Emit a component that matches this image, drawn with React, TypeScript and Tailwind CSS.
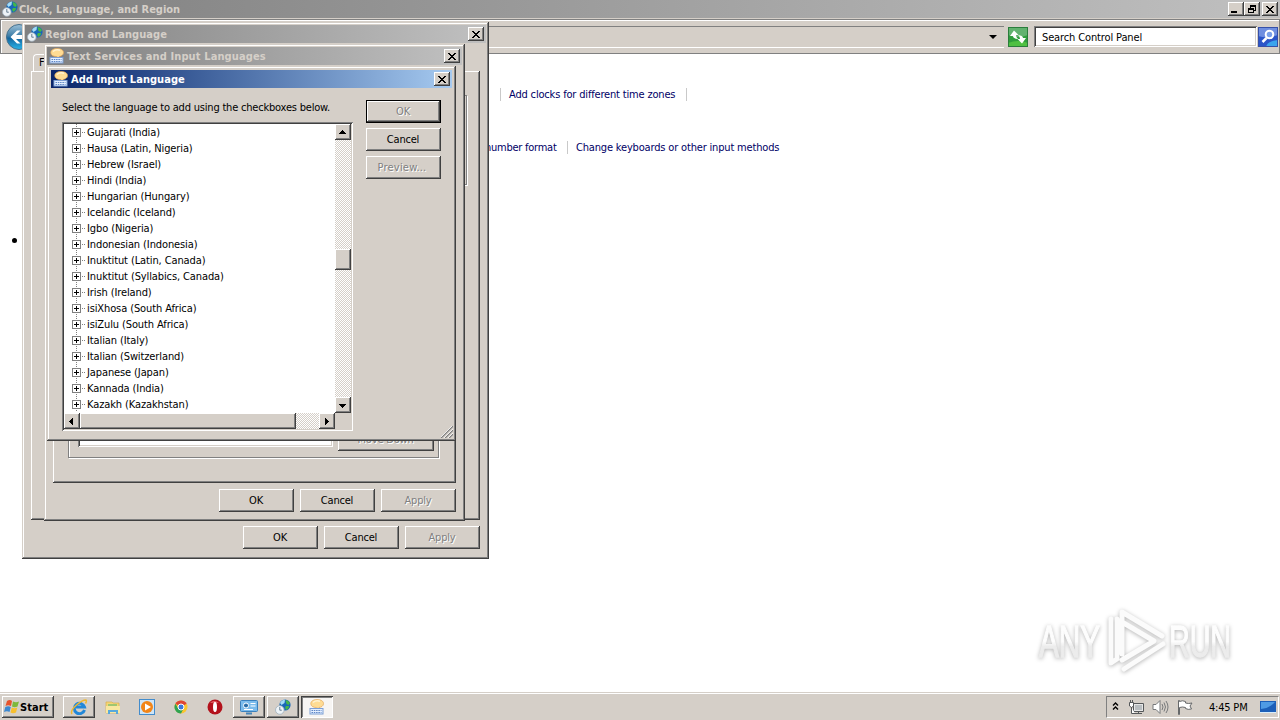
import type { ReactNode } from 'react'
import { clsx } from 'clsx'

const languages = [
    'Gujarati (India)',
    'Hausa (Latin, Nigeria)',
    'Hebrew (Israel)',
    'Hindi (India)',
    'Hungarian (Hungary)',
    'Icelandic (Iceland)',
    'Igbo (Nigeria)',
    'Indonesian (Indonesia)',
    'Inuktitut (Latin, Canada)',
    'Inuktitut (Syllabics, Canada)',
    'Irish (Ireland)',
    'isiXhosa (South Africa)',
    'isiZulu (South Africa)',
    'Italian (Italy)',
    'Italian (Switzerland)',
    'Japanese (Japan)',
    'Kannada (India)',
    'Kazakh (Kazakhstan)',
]

const raised = 'bg-[#d5cfc8] shadow-[inset_-1px_-1px_#404040,inset_1px_1px_#fff,inset_-2px_-2px_#808080]'
const frame = 'bg-[#d5cfc8] shadow-[inset_-1px_-1px_#404040,inset_1px_1px_#d5cfc8,inset_-2px_-2px_#808080,inset_2px_2px_#fff]'
const sunken = 'shadow-[inset_1px_1px_#808080,inset_-1px_-1px_#fff,inset_2px_2px_#404040,inset_-2px_-2px_#d5cfc8]'
const dither = 'bg-[repeating-conic-gradient(#fff_0_25%,#d5cfc8_0_50%)] bg-[length:2px_2px]'

function GlobeIcon() {
    return (
        <svg viewBox="0 0 16 16" className="size-4 shrink-0">
            <circle cx="10" cy="6" r="5.6" fill="#1768b8" />
            <path d="M5 4q1-3 5-3.500L9.500 4 6.500 6z" fill="#a5dcf5" />
            <path d="M10.500 1q3 .5 4.500 3l-1.500 2-2-1zM11 7l3 0q.5 2-2.500 4l-1.500-2z" fill="#43b649" />
            <circle cx="4.800" cy="11" r="4.300" fill="#edf3f7" stroke="#9fb0bc" strokeWidth=".8" />
            <path d="M4.800 8v3.200h2" fill="none" stroke="#5b7488" strokeWidth=".9" />
        </svg>
    )
}

function KeyboardIcon({ className = 'size-4' }: { className?: string }) {
    return (
        <svg viewBox="0 0 16 16" className={clsx('shrink-0', className)}>
            <path d="M8 .6c4 0 6.500 1.500 6.500 4S12 8.300 10 8.500l1 2.300L7.500 8.600C4 8.400 1.800 7 1.800 4.700S4 .6 8 .6z" fill="#ffdc94" stroke="#e2a659" strokeWidth=".7" />
            <path d="M4 3.500q3-2.500 7-1.200" stroke="#fff3d4" strokeWidth="1.500" fill="none" />
            <rect x="1" y="9.500" width="13" height="5.500" fill="#e4efff" stroke="#7d9fd4" />
            <path d="M2.500 11.500h10M2.500 13.500h10" stroke="#5d85c6" strokeDasharray="1.500 .8" />
        </svg>
    )
}

function CloseGlyph() {
    return (
        <svg viewBox="0 0 8 7" className="h-[7px] w-2" shapeRendering="crispEdges">
            <path d="M0 0h2v1h1v1h2V1h1V0h2v1H7v1H6v1H5v1h1v1h1v1h1v1H6V6H5V5H3v1H2v1H0V6h1V5h1V4h1V3H2V2H1V1H0z" fill="#000" />
        </svg>
    )
}

function CaptionButton({ children }: { children: ReactNode }) {
    return <button className={clsx('flex h-[14px] w-4 shrink-0 items-center justify-center', raised)}>{children}</button>
}

interface TitleBarProps {
    icon: ReactNode
    title: string
    active?: boolean
}

function TitleBar({ icon, title, active }: TitleBarProps) {
    return (
        <div
            className={clsx(
                'flex h-[18px] items-center bg-linear-to-r px-[2px] text-[11px] font-bold tracking-[0.05px]',
                active ? 'from-[#0a246a] to-[#a6caf0] text-white' : 'from-[#808080] to-[#c0c0c0] text-[#d5cfc8]'
            )}
        >
            {icon}
            <span className="ml-[2px] flex-1 whitespace-nowrap">{title}</span>
            <CaptionButton>
                <CloseGlyph />
            </CaptionButton>
        </div>
    )
}

interface ButtonProps {
    children: ReactNode
    disabled?: boolean
    isDefault?: boolean
    width?: string
}

function Button({ children, disabled, isDefault, width = 'w-[75px]' }: ButtonProps) {
    return (
        <button
            className={clsx(
                'flex h-[23px] shrink-0 items-center justify-center whitespace-nowrap pr-px',
                width,
                raised,
                isDefault && 'border border-black',
                disabled && 'text-[#808080] [text-shadow:1px_1px_#fff]'
            )}
        >
            {children}
        </button>
    )
}

function ScrollButton({ d }: { d: string }) {
    return (
        <div className={clsx('flex size-4 shrink-0 items-center justify-center pr-px', raised)}>
            <svg viewBox="0 0 8 8" className="mr-px size-2" shapeRendering="crispEdges">
                <path d={d} />
            </svg>
        </div>
    )
}

function LanguageTree() {
    return (
        <div className={clsx('h-[309px] w-[291px] bg-white p-[2px]', sunken)}>
            <div className="flex h-[289px]">
                <ul className="w-[271px] overflow-hidden tracking-[-0.11px]">
                    {languages.map((name) => (
                        <li key={name} className="flex h-4 items-center">
                            <span className="flex h-4 w-[25px] items-center bg-[repeating-linear-gradient(#808080_0_1px,transparent_1px_2px)] bg-[length:1px_16px] bg-[position:12px_0] bg-no-repeat pl-2">
                                <svg viewBox="0 0 14 9" className="h-[9px] w-[14px]" shapeRendering="crispEdges">
                                    <path d="M.5.5h8v8h-8z" fill="#fff" stroke="#808080" />
                                    <path d="M2 4h5v1H2zM4 2h1v5H4z" />
                                    <path d="M10 4h1v1h-1zM12 4h1v1h-1z" fill="#808080" />
                                </svg>
                            </span>
                            <span className="-ml-[2px] whitespace-nowrap">{name}</span>
                        </li>
                    ))}
                </ul>
                <div className={clsx('flex w-4 flex-col', dither)}>
                    <ScrollButton d="M4 2h1v1h1v1h1v1h1v1H1V5h1V4h1V3h1z" />
                    <div className={clsx('mt-[109px] h-[21px]', raised)} />
                    <div className="flex-1" />
                    <ScrollButton d="M1 3h7v1H7v1H6v1H5v1H4V6H3V5H2V4H1z" />
                </div>
            </div>
            <div className="flex h-4">
                <div className={clsx('flex w-[271px]', dither)}>
                    <ScrollButton d="M2 4h1V3h1V2h1V1h1v7H5V7H4V6H3V5H2z" />
                    <div className={clsx('w-[216px]', raised)} />
                    <div className="flex-1" />
                    <ScrollButton d="M3 1h1v1h1v1h1v1h1v1H6v1H5v1H4v1H3z" />
                </div>
                <div className="w-4 bg-[#d5cfc8]" />
            </div>
        </div>
    )
}

function RegionWindow() {
    return (
        <div className={clsx('absolute left-[22px] top-[22px] h-[537px] w-[467px] p-[3px]', frame)}>
            <TitleBar icon={<GlobeIcon />} title="Region and Language" />
            <div className="px-[6px] pt-[11px]">
                <div className="ml-[2px] h-[17px] w-3 rounded-tl-sm border-l border-t border-white pl-[5px] leading-[16px]">F</div>
                <div className={clsx('flex h-[449px] justify-end pr-[13px] pt-6', raised)}>
                    <div className="h-[90px] w-20 border border-[#808080] shadow-[1px_1px_#fff]" />
                </div>
                <div className="mt-[6px] flex justify-end gap-[6px]">
                    <Button>OK</Button>
                    <Button>Cancel</Button>
                    <Button disabled>Apply</Button>
                </div>
            </div>
        </div>
    )
}

function TextServicesWindow() {
    return (
        <div className={clsx('absolute left-[44px] top-[44px] h-[477px] w-[421px] p-[3px]', frame)}>
            <div className="h-[18px] [&>div]:tracking-[0.12px]">
                <TitleBar icon={<KeyboardIcon />} title="Text Services and Input Languages" />
            </div>
            <div className="px-[6px] pt-6">
                <div className={clsx('h-[394px] pl-[15px] pr-[17px] pt-5', raised)}>
                    <div className="flex h-[349px] items-end justify-between border border-[#808080] pb-[6px] pl-[9px] pr-1 shadow-[1px_1px_#fff,inset_1px_1px_#fff]">
                        <div className={clsx('mb-1 h-[120px] w-[255px] bg-white', sunken)} />
                        <Button disabled width="w-24">Move Down</Button>
                    </div>
                </div>
                <div className="mt-[6px] flex justify-end gap-[6px]">
                    <Button>OK</Button>
                    <Button>Cancel</Button>
                    <Button disabled>Apply</Button>
                </div>
            </div>
        </div>
    )
}

function AddLanguageWindow() {
    return (
        <div className={clsx('absolute left-[47px] top-[66px] h-[375px] w-[409px] p-1', frame)}>
            <TitleBar icon={<KeyboardIcon />} title="Add Input Language" active />
            <div className="flex justify-between px-[11px] pt-3">
                <div>
                    <p className="mb-2 h-[14px] whitespace-nowrap pt-px leading-[13px]">Select the language to add using the checkboxes below.</p>
                    <LanguageTree />
                </div>
                <div className="flex flex-col gap-[5px]">
                    <Button disabled isDefault>OK</Button>
                    <Button>Cancel</Button>
                    <Button disabled>
                        <span className="mr-[2px] tracking-[0.2px]">Preview...</span>
                    </Button>
                </div>
            </div>
            {/* Resize grip */}
            <svg viewBox="0 0 12 12" className="absolute bottom-[3px] right-[3px] size-3">
                <path d="M0 12 12 0M4 12l8-8M8 12l4-4" stroke="#808080" strokeWidth="1.400" />
                <path d="M-1 12 12-1M3 12l9-9M7 12l5-5" stroke="#fff" strokeWidth=".8" />
            </svg>
        </div>
    )
}

function ExplorerHeader() {
    return (
        <header className="h-[54px] bg-[#d5cfc8]">
            <div className="flex h-[18px] items-center bg-linear-to-r from-[#808080] to-[#c0c0c0] pl-[2px] pr-[2px] text-[11px] font-bold tracking-[-0.03px] text-[#d5cfc8]">
                <GlobeIcon />
                <span className="ml-px flex-1">Clock, Language, and Region</span>
                <CaptionButton>
                    <span className="mr-1 mt-[5px] h-[2px] w-[6px] bg-black" />
                </CaptionButton>
                <CaptionButton>
                    <svg viewBox="0 0 8 8" className="size-2" shapeRendering="crispEdges">
                        <path d="M2 0h6v6H6V5h1V2H3v1H2zM0 3h6v5H0zm1 2v2h4V5z" fillRule="evenodd" />
                    </svg>
                </CaptionButton>
                <span className="w-[2px]" />
                <CaptionButton>
                    <CloseGlyph />
                </CaptionButton>
            </div>
            <div className="mt-px flex h-[35px] items-center border border-[#808080] pl-1 pr-px shadow-[inset_1px_1px_#fff]">
                <svg viewBox="0 0 28 28" className="size-7">
                    <defs>
                        <linearGradient id="back" x2="0" y2="1">
                            <stop stopColor="#9cc0d8" />
                            <stop offset=".45" stopColor="#3f7fa8" />
                            <stop offset=".55" stopColor="#14669f" />
                            <stop offset="1" stopColor="#29b5ea" />
                        </linearGradient>
                    </defs>
                    <circle cx="14" cy="14" r="12.500" fill="url(#back)" stroke="#46708c" />
                    <path d="M5.500 14 12 7.500h3.500L11 12h11v4H11l4.500 4.500H12z" fill="#fff" />
                </svg>
                <div className="flex h-[22px] flex-1 items-center justify-end border-b border-t border-b-white border-t-[#808080] pr-[7px]">
                    <svg viewBox="0 0 8 4" className="h-1 w-2">
                        <path d="M0 0h8L4 4z" />
                    </svg>
                </div>
                <svg viewBox="0 0 20 20" className="ml-1 size-5">
                    <rect width="20" height="20" fill="#2f9d3c" />
                    <path d="M0 0h20v8Q10 12 0 8z" fill="#62b26f" />
                    <path d="M0 20v-4q10-4 20 0v4z" fill="#4fc042" />
                    <path d="M2 9l4-5.500L10.500 8H8q0 2.500 2 4-5-.5-5-3zM18 11l-4 5.500L9.500 12H12q0-2.500-2-4 5 .5 5 3z" fill="#fff" />
                    <rect x=".5" y=".5" width="19" height="19" fill="none" stroke="#2b7d3c" />
                </svg>
                <div className={clsx('ml-[6px] flex h-[21px] w-[223px] items-center bg-white pl-2 pt-px tracking-[-0.13px]', sunken)}>Search Control Panel</div>
                <svg viewBox="0 0 20 20" className="ml-px size-5">
                    <rect width="20" height="20" fill="#2b55c8" />
                    <path d="M0 0h20v8Q10 12 0 9z" fill="#6e8ee0" />
                    <path d="M8 20q1-6 12-7v7z" fill="#3ba4ed" />
                    <circle cx="11.500" cy="7.500" r="3.800" fill="#7aa0ea" stroke="#fff" strokeWidth="2" />
                    <path d="M8.500 11l-4 4" stroke="#fff" strokeWidth="2.500" />
                    <rect x=".5" y=".5" width="19" height="19" fill="none" stroke="#3650a8" />
                </svg>
            </div>
        </header>
    )
}

function Watermark() {
    return (
        <svg viewBox="0 0 220 80" className="absolute left-[1030px] top-[600px] h-20 w-[220px] drop-shadow-[0_1px_2px_#b4b4b4]">
            <defs>
                <linearGradient id="mark" x2="0" y2="1">
                    <stop offset=".5" stopColor="#fdfdfd" />
                    <stop offset=".6" stopColor="#ececec" />
                </linearGradient>
            </defs>
            <g fontFamily="'Liberation Sans Narrow', 'Liberation Sans'" fontSize="45" fill="url(#mark)" stroke="url(#mark)" strokeWidth="1.300">
                <text x="9" y="57" textLength="61" lengthAdjust="spacingAndGlyphs">ANY</text>
                <text x="139" y="57" textLength="62" lengthAdjust="spacingAndGlyphs">RUN</text>
            </g>
            <g fill="none" stroke="#fbfbfb" strokeWidth="5" strokeLinejoin="round" strokeLinecap="round">
                <path d="M92 54V12l40 24M92 22l32 19-32 19M81 19v44l6-4V19M94 69l39-25" />
            </g>
        </svg>
    )
}

function TaskButton({ children, className }: { children: ReactNode; className?: string }) {
    return <button className={clsx('flex h-[22px] w-8 shrink-0 items-center justify-center', className ?? raised)}>{children}</button>
}

function Taskbar() {
    return (
        <footer className="mt-auto flex h-[28px] items-center border-t border-[#d5cfc8] bg-[#d5cfc8] pl-[2px] pr-px pt-px shadow-[inset_0_1px_#fff]">
            <button className={clsx('flex h-[22px] w-[52px] items-center pl-[2px] text-[11px] font-bold tracking-[0.05px]', raised)}>
                <svg viewBox="0 0 16 16" className="size-4 shrink-0">
                    <path d="M3 2q3-2 5 0L7 7Q4 5.500 1.500 7z" fill="#e6532c" />
                    <path d="M9 2.500q3 1.500 6 0L13.500 7.500q-3 1.500-5.500 0z" fill="#7db83a" />
                    <path d="M1.300 8q3-1.500 5.500 0L5.500 13Q3 11.500 0 13z" fill="#3c88d0" />
                    <path d="M7.800 8.500q3 1.500 5.500 0L12 13.500q-3 1.500-5.500 0z" fill="#f8bf2d" />
                </svg>
                <span>Start</span>
            </button>
            <div className="ml-[9px] flex items-center">
                <TaskButton>
                    <svg viewBox="0 0 18 16" className="h-4 w-[18px]">
                        <path d="M14.500 11A5.200 5.200 0 1 1 14.500 8H6" fill="none" stroke="#2187d8" strokeWidth="2.900" />
                        <path d="M2 15Q0 12 6 6.500T16 1q1 1-.5 3.500" fill="none" stroke="#efb72f" strokeWidth="1.500" />
                    </svg>
                </TaskButton>
                <svg viewBox="0 0 16 16" className="ml-[10px] size-4">
                    <path d="M1 3h6l1 1h6v10H1z" fill="#f3d677" stroke="#d7a93f" strokeWidth=".6" />
                    <path d="M3 5h9v4H3z" fill="#9ec672" />
                    <path d="M1 7h14v7H1z" fill="#f8e7a0" />
                    <path d="M3 15v-4h10v4h-2v-2H5v2z" fill="#58a9dc" />
                </svg>
                <svg viewBox="0 0 16 16" className="ml-[18px] size-4">
                    <rect x=".5" y=".5" width="15" height="15" fill="#cee5f7" stroke="#438ccc" />
                    <circle cx="8" cy="8" r="6" fill="#f28518" />
                    <path d="M6 4.500 12 8l-6 3.500z" fill="#fff" />
                </svg>
                <svg viewBox="0 0 16 16" className="ml-[18px] size-4">
                    <circle cx="8" cy="8" r="6.500" fill="#fbc52f" />
                    <path d="M8 8 2.400 4.700A6.500 6.500 0 0 1 13.600 4.700z" fill="#df4535" />
                    <path d="M2.400 4.700A6.500 6.500 0 0 0 8 14.500l2.500-5L5 9z" fill="#30a352" />
                    <circle cx="8" cy="8" r="3" fill="#3c78dc" stroke="#fff" />
                </svg>
                <svg viewBox="0 0 16 16" className="ml-[18px] size-4">
                    <circle cx="8" cy="8" r="7.500" fill="#b3111b" />
                    <path d="M3 4q4-4 9 0-4-1-9 0z" fill="#e9686d" />
                    <ellipse cx="8" cy="8" rx="2" ry="5" fill="#fff" />
                </svg>
                <TaskButton className={clsx('ml-[10px]', raised)}>
                    <svg viewBox="0 0 18 16" className="h-4 w-[18px]">
                        <rect x=".5" y="1.500" width="17" height="11" rx="1" fill="#7cbcec" stroke="#3a80bd" />
                        <circle cx="6" cy="6.500" r="2.500" fill="#2a6da8" stroke="#fff" />
                        <path d="M10.500 4.500h5M10.500 7h5M4 10.500h9" stroke="#fff" strokeWidth="1.200" />
                        <path d="M6 14.500h6" stroke="#4985b5" strokeWidth="2" />
                    </svg>
                </TaskButton>
                <TaskButton className={clsx('ml-[2px]', raised)}>
                    <GlobeIcon />
                </TaskButton>
                <TaskButton className="ml-[2px] bg-[#f7f5f3] shadow-[inset_1px_1px_#404040,inset_-1px_-1px_#fff,inset_2px_2px_#808080]">
                    <KeyboardIcon />
                </TaskButton>
            </div>
            <div className="ml-auto flex h-[22px] w-[173px] items-center border border-b-white border-l-[#808080] border-r-white border-t-[#808080] pl-[5px]">
                <svg viewBox="0 0 7 9" className="mb-[2px] h-[9px] w-[7px]" fill="none" stroke="#000" strokeWidth="1.400">
                    <path d="M1 3.500 3.500 1 6 3.500M1 7.500 3.500 5 6 7.500" />
                </svg>
                <svg viewBox="0 0 16 16" className="ml-[9px] size-4" fill="none" stroke="#55585a">
                    <path d="M5.500 4.500h10v8h-10zM7 14.500h7M10.500 12v2" fill="#e6e6e6" />
                    <path d="M7 6h7v5H7z" fill="#b8bdc0" stroke="none" />
                    <path d="M1.500 3.500h4V7l-2 1.500-2-1.500zM2.500 1v2M4.500 1v2M3.500 8v6.500H7" fill="#fff" />
                </svg>
                <svg viewBox="0 0 17 16" className="ml-2 h-4 w-[17px]" fill="none" stroke="#77797b">
                    <path d="M1 5.500h3l4-4v13l-4-4H1z" fill="#fff" />
                    <path d="M10 5q2 3 0 6M12 3.500q3 4.500 0 9M14 2q4 6 0 12" />
                </svg>
                <svg viewBox="0 0 16 16" className="ml-2 size-4" fill="#fff" stroke="#66686a">
                    <path d="M2.500 15.500h-1V1.500h1v1q3-1.500 6 0v1.500q3 1 6.500 0l-2 3 1.500 3q-3.500 1-6-.5v-1q-3-1-6 0z" />
                </svg>
                <span className="ml-4 whitespace-nowrap">4:45 PM</span>
                <svg viewBox="0 0 16 14" className="ml-auto mr-[2px] h-[14px] w-4">
                    <path d="M0 1h16v11H0z" fill="#1c5fb8" />
                    <path d="M1 2h14Q10 8 1 9z" fill="#4f9be4" />
                    <path d="M0 12h16v1H0z" fill="#d8edfb" />
                </svg>
            </div>
        </footer>
    )
}

export default function App() {
    return (
        <div className="relative flex h-[720px] w-[1280px] flex-col overflow-hidden bg-white font-['DejaVu_Sans_Condensed','DejaVu_Sans',sans-serif] text-[11px] leading-[13px] tracking-[-0.2px] text-black [font-stretch:condensed]">
            <ExplorerHeader />
            <main className="flex flex-col text-[#000066]">
                <div className="ml-[500px] mt-[34px] flex h-[13px] w-[187px] justify-between whitespace-nowrap border-x border-[#c9c9c9] px-2 tracking-[-0.17px]">Add clocks for different time zones</div>
                <div className="ml-[485px] mt-10 flex h-[13px] whitespace-nowrap tracking-[-0.17px]">
                    <span className="w-[82px] tracking-[-0.25px]">number format</span>
                    <span className="border-l border-[#c9c9c9] pl-2">Change keyboards or other input methods</span>
                </div>
                <span className="ml-3 mt-[84px] size-[5px] rounded-full bg-black" />
            </main>
            <Taskbar />
            <RegionWindow />
            <TextServicesWindow />
            <AddLanguageWindow />
            <Watermark />
        </div>
    )
}
